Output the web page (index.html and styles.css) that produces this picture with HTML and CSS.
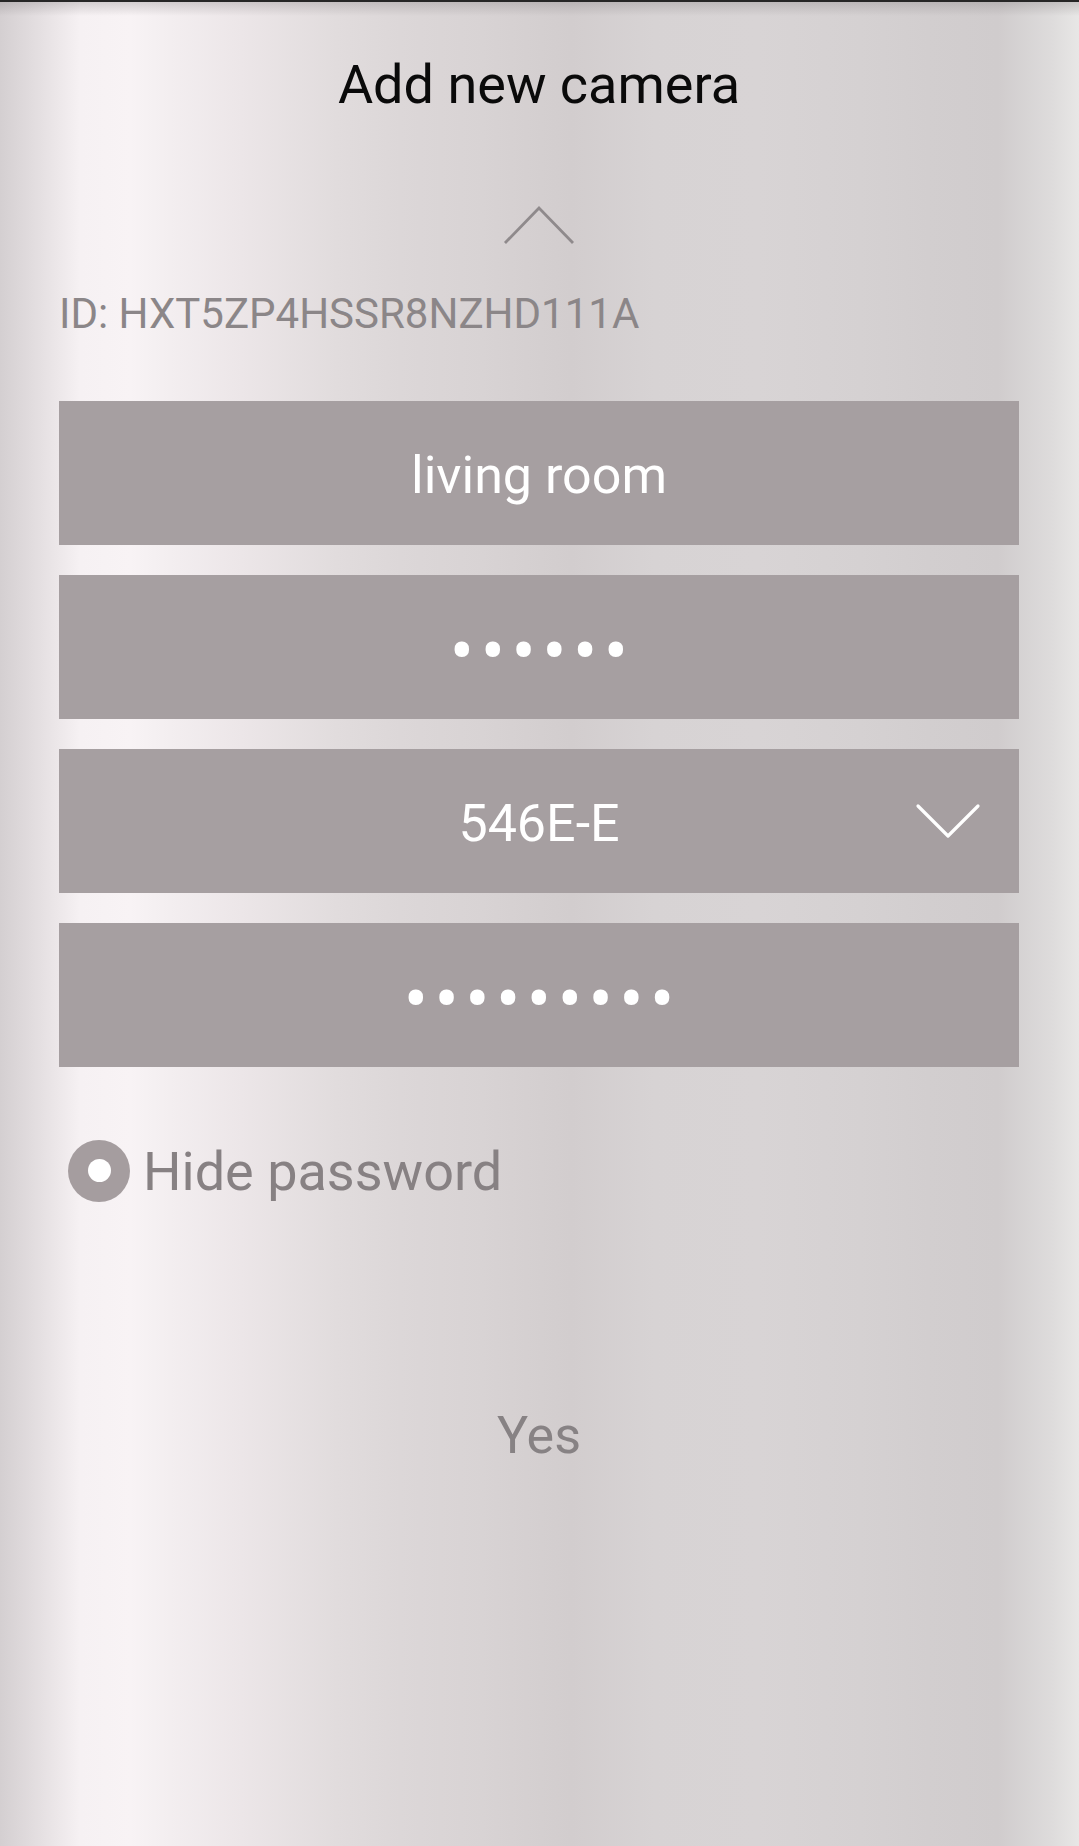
FILE: index.html
```html
<!DOCTYPE html>
<html lang="en">
<head>
<meta charset="UTF-8" />
<meta name="viewport" content="width=device-width, initial-scale=1" />
<title>Add new camera</title>
<link rel="stylesheet" href="styles.css">
</head>
<body>
  <div class="screen">

    <!-- Cabeçalho -->
    <h1 class="title">Add new camera</h1>

    <svg class="chevronUp" viewBox="0 0 72 40" width="72" height="40">
      <path d="M2 38 L36 3 L70 38" fill="none" stroke="#8f8a8c" stroke-width="2.8" />
    </svg>

    <p class="cameraId">ID: HXT5ZP4HSSR8NZHD111A</p>

    <!-- Campos -->
    <div class="fields">
      <div class="field"><span class="fieldText">living room</span></div>
      <div class="field"><span class="dots">••••••</span></div>
      <div class="field select">
        <span class="fieldText">546E-E</span>
        <svg class="chevronDown" viewBox="0 0 66 36" width="66" height="36">
          <path d="M3 3 L33 33 L63 3" fill="none" stroke="#ffffff" stroke-width="3.2" stroke-linecap="round" stroke-linejoin="round" />
        </svg>
      </div>
      <div class="field"><span class="dots">•••••••••</span></div>
    </div>

    <!-- Esconder senha -->
    <label class="hideRow">
      <span class="radio"></span>
      <span class="hideText">Hide password</span>
    </label>

    <button class="yesBtn">Yes</button>
  </div>
</body>
</html>
```

FILE: styles.css
```css
/* Reset básico */
* {
  margin: 0; padding: 0; box-sizing: border-box;
}

html, body {
  width: 1079px;
  height: 1846px;
  overflow: hidden;
}

body {
  font-family: Roboto, 'Liberation Sans', sans-serif;
  background:
    linear-gradient(to bottom, #262626 0, #262626 2px, rgba(120,115,117,0.28) 2px, rgba(120,115,117,0) 16px),
    linear-gradient(to right,
      #d4cfd1 0px, #e5e0e2 41px, #f6f1f3 80px, #f8f3f5 130px, #f3eef0 170px,
      #ece6e8 241px, #e1dcdd 337px, #dcd7d8 400px, #d8d3d4 482px, #d2cdce 571px,
      #d7d3d4 654px, #d8d4d5 757px, #d5d1d2 860px, #d2cecf 929px, #d0cccd 998px,
      #dedcdc 1053px, #e8e7e6 1079px);
}

.screen {
  display: flex;
  flex-direction: column;
  padding: 55px 60px 0 59px;
}

.title {
  font-weight: 400;
  font-size: 54px;
  line-height: 60px;
  text-align: center;
  color: #0a0a0a;
}

.chevronUp {
  display: block;
  margin: 90px auto 0;
  align-self: center;
}

.cameraId {
  margin-top: 45px;
  font-size: 42px;
  line-height: 48px;
  color: #8b8688;
}

/* Campos cinza */
.fields {
  margin-top: 63px;
  display: flex;
  flex-direction: column;
  gap: 30px;
}

.field {
  height: 144px;
  background: #a69fa1;
  display: flex;
  justify-content: center;
  align-items: center;
  color: #ffffff;
}

.fieldText {
  font-size: 52px;
  padding-top: 4px;
}

.dots {
  font-size: 72px;
  line-height: 72px;
  letter-spacing: 6.5px;
  margin-right: -6.5px;
  padding-top: 9px;
}

.select {
  display: grid;
  grid-template-columns: 1fr auto 1fr;
  align-items: center;
}
.select .fieldText {
  grid-column: 2;
}
.chevronDown {
  grid-column: 3;
  justify-self: end;
  margin-right: 38px;
}

/* Linha "Hide password" */
.hideRow {
  margin-top: 71px;
  display: flex;
  align-items: center;
  gap: 13px;
  padding-left: 9px;
}

.radio {
  width: 62px;
  height: 62px;
  border-radius: 50%;
  background: #a59d9f;
  display: flex;
  justify-content: center;
  align-items: center;
}
.radio::after {
  content: '';
  width: 23px;
  height: 23px;
  border-radius: 50%;
  background: #ffffff;
}

.hideText {
  font-size: 54px;
  line-height: 62px;
  padding-top: 3px;
  color: #878183;
}

.yesBtn {
  margin-top: 203px;
  align-self: center;
  background: none;
  border: none;
  font-family: inherit;
  font-size: 52px;
  line-height: 60px;
  color: #878284;
}
```
